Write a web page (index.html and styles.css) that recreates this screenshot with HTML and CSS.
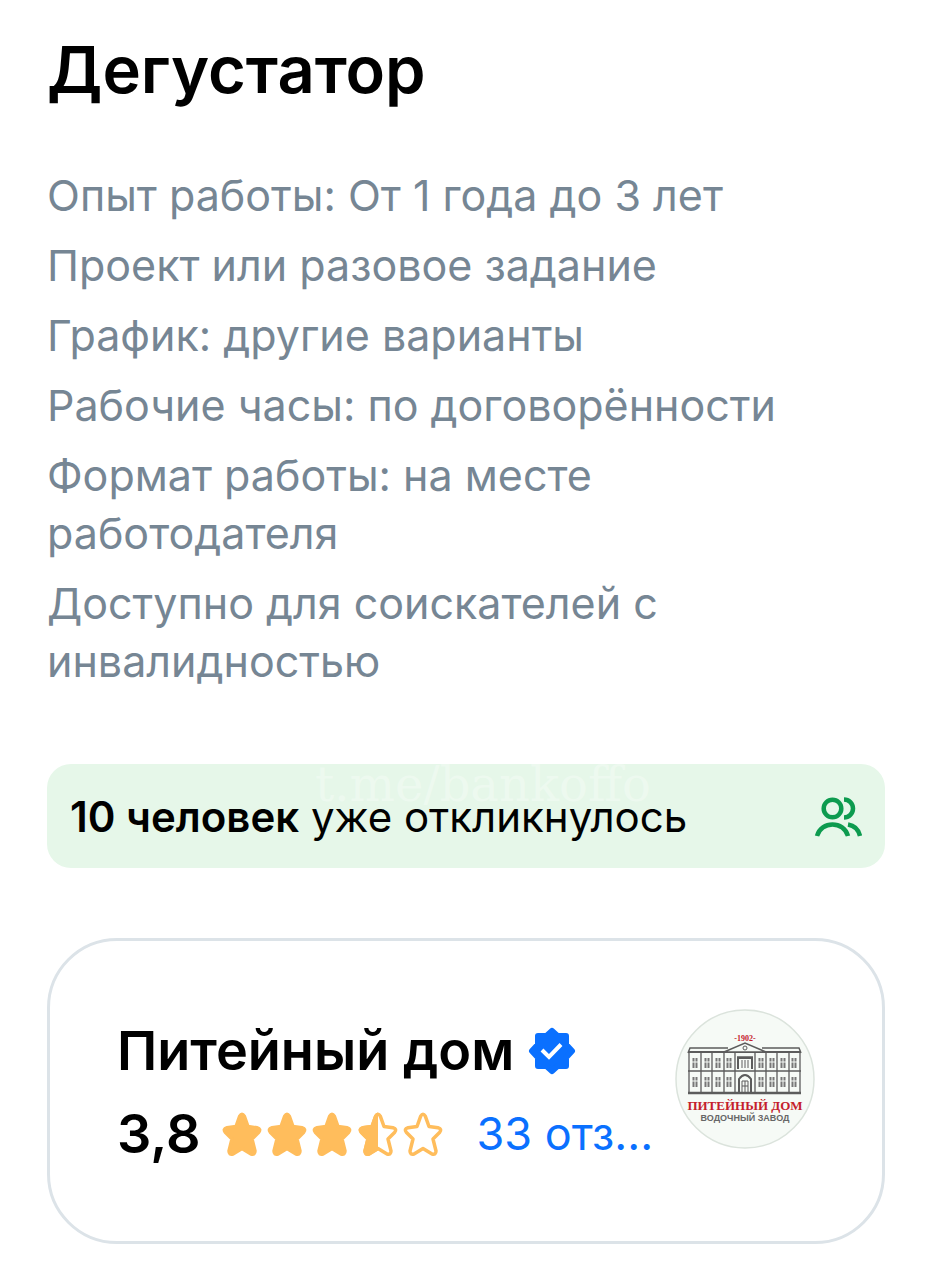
FILE: index.html
```html
<!DOCTYPE html>
<html lang="ru">
<head>
<meta charset="utf-8">
<meta name="viewport" content="width=device-width, initial-scale=1">
<title>Дегустатор</title>
<link rel="stylesheet" href="styles.css">
</head>
<body>
<main class="vacancy">
  <h1 class="title">Дегустатор</h1>
  <ul class="details">
    <li>Опыт работы: От 1 года до 3 лет</li>
    <li>Проект или разовое задание</li>
    <li>График: другие варианты</li>
    <li>Рабочие часы: по договорённости</li>
    <li>Формат работы: на месте работодателя</li>
    <li>Доступно для соискателей с инвалидностью</li>
  </ul>

  <section class="responses">
    <p class="responses-text"><strong>10 человек</strong> уже откликнулось</p>
    <svg class="people" viewBox="0 0 48 42" aria-hidden="true">
      <g fill="none" stroke="#0d9b4f" stroke-width="4.500">
        <circle cx="18.500" cy="12.500" r="8.800"/>
        <path d="M30 3.500a9 9 0 0 1 0 18"/>
        <path d="M3 40C7 24.500 30 24.500 34 40"/>
        <path d="M34 28.500c6 1 10.500 5 12 11.500"/>
      </g>
    </svg>
    <span class="watermark">t.me/bankoffo</span>
  </section>

  <section class="employer">
    <div class="info">
      <h2 class="name">Питейный дом
        <svg class="badge" viewBox="0 0 48 48" role="img" aria-label="Проверено">
          <path d="M24 4l5.500 5h8.500v8.500l6 6.500-6 6.500V39h-8.500L24 44l-5.500-5H10v-8.500L4 24l6-6.500V9h8.500z" fill="#0a70ff" stroke="#0a70ff" stroke-width="6" stroke-linejoin="round"/>
          <path d="M14 23l7 7 12-12.500" fill="none" stroke="#fff" stroke-width="4"/>
        </svg>
      </h2>
      <div class="rating">
        <span class="score">3,8</span>
        <svg class="stars" viewBox="0 0 224 46" role="img" aria-label="3,8 из 5">
          <defs>
            <path id="star" d="M18.700 5.200Q21 1.500 23.300 5.200L27 15.500L36 16.800Q40.500 18 37.500 21.500L31 28L34 40Q34 44 30 43L21 37.500L12 43Q8 44 8 40L11 28L4.500 21.500Q1.500 18 6 16.800L15 15.500Z" stroke="#ffbd5c" stroke-width="3.500" stroke-linejoin="round"/>
            <clipPath id="half"><path d="M0 0h21v46H0z"/></clipPath>
          </defs>
          <use href="#star" fill="#ffbd5c"/>
          <use href="#star" x="45" fill="#ffbd5c"/>
          <use href="#star" x="90" fill="#ffbd5c"/>
          <g transform="translate(136 0)">
            <use href="#star" fill="none"/>
            <use href="#star" fill="#ffbd5c" clip-path="url(#half)"/>
          </g>
          <use href="#star" x="181" fill="none"/>
        </svg>
        <a class="reviews" href="#reviews">33 отз...</a>
      </div>
    </div>
    <svg class="logo" viewBox="0 0 140 140" role="img" aria-label="Питейный дом, водочный завод">
      <defs>
        <g id="window"><path d="M-2.500-5h5V5h-5z" fill="#777"/><path d="M0-5V5M-3-1h6" stroke="#f6faf6"/></g>
        <g id="floor">
          <use href="#window" x="20"/><use href="#window" x="32"/><use href="#window" x="43"/><use href="#window" x="54"/>
          <use href="#window" x="86"/><use href="#window" x="97"/><use href="#window" x="108"/><use href="#window" x="119"/>
        </g>
      </defs>
      <circle cx="70" cy="70" r="69" fill="#f6faf6" stroke="#dbe3dc" stroke-width="1.500"/>
      <text class="logo-year" x="70" y="32" text-anchor="middle">-1902-</text>
      <g fill="none" stroke="#5c5c5c">
        <path d="M13 44l2-5h38M87 39h37l2 5" stroke-width="1.500"/>
        <path d="M13 43h113" stroke-width="2"/>
        <path d="M49 43l21-9 21 9z" fill="#f6faf6" stroke-width="1.500"/>
        <circle cx="70" cy="39" r="2"/>
        <path d="M14 43v41M26 43v41M37 43v41M49 43v41M60 43v41M80 43v41M91 43v41M102 43v41M114 43v41M125 43v41" stroke-width="1.300"/>
        <path d="M13 62h113M62 48h16" stroke-width="1.500"/>
        <path d="M13 84h113" stroke-width="2.500"/>
        <path d="M64 84V70q6-8 12 0v14M63 60V49h14v11" stroke-width="2"/>
        <path d="M67 83V72h6v11M70 72v11M67 77h6M67 51v8M70 51v8M73 51v8"/>
      </g>
      <use href="#floor" y="54"/>
      <use href="#floor" y="73"/>
      <text class="logo-name" x="70" y="101" text-anchor="middle">ПИТЕЙНЫЙ ДОМ</text>
      <text class="logo-kind" x="70" y="112" text-anchor="middle">ВОДОЧНЫЙ ЗАВОД</text>
    </svg>
  </section>
</main>
</body>
</html>
```
FILE: styles.css
```css
* { box-sizing: border-box; }
body {
  margin: 0;
  background: #fff;
  color: #000;
  font-family: Inter, "Liberation Sans", sans-serif;
}
.vacancy { padding: 28px 47px 36px; }
.title {
  margin: 0;
  font-size: 65px;
  line-height: 84px;
  font-weight: 600;
}
.details {
  list-style: none;
  margin: 54px 0 0;
  padding: 0;
  display: flex;
  flex-direction: column;
  gap: 12px;
  color: #768694;
  font-size: 43px;
  line-height: 58px;
}
.responses {
  position: relative;
  display: flex;
  align-items: center;
  justify-content: space-between;
  margin-top: 74px;
  padding: 24px 23px 22px;
  border-radius: 24px;
  background: #e6f7e9;
}
.responses-text {
  margin: 0;
  font-size: 42px;
  line-height: 58px;
}
.responses-text strong { font-weight: 600; }
.people { width: 48px; height: 42px; }
.watermark {
  position: absolute;
  top: -4px;
  left: 268px;
  color: rgba(255, 255, 255, 0.3);
  font: 48px/48px "DejaVu Serif", serif;
}
.employer {
  display: flex;
  align-items: flex-start;
  justify-content: space-between;
  margin-top: 70px;
  padding: 68px 67px 66px;
  border: 3px solid #dce3e8;
  border-radius: 70px;
}
.name {
  display: flex;
  align-items: center;
  gap: 14px;
  margin: 0;
  font-size: 54px;
  line-height: 84px;
  font-weight: 600;
}
.badge { width: 48px; height: 48px; }
.rating {
  display: flex;
  align-items: center;
  line-height: 82px;
}
.score { font-size: 54px; font-weight: 600; }
.stars { width: 224px; height: 46px; margin: 0 32px 0 20px; }
.reviews { color: #0a70ff; font-size: 45px; text-decoration: none; }
.logo { flex: none; width: 140px; height: 140px; }
.logo-year { font: bold 8px "Liberation Serif", serif; fill: #c4202b; }
.logo-name { font: bold 13px "Liberation Serif", serif; fill: #c4202b; }
.logo-kind { font: bold 9px "Liberation Sans", sans-serif; fill: #666; }
```
